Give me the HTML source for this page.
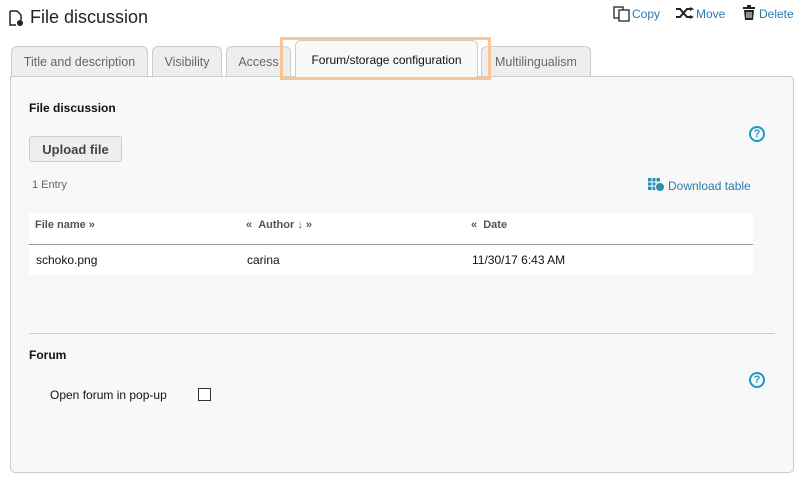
<!DOCTYPE html>
<html><head><style>
*{box-sizing:border-box;margin:0;padding:0}
body{width:802px;height:484px;background:#fff;font-family:"Liberation Sans",Arial,sans-serif;position:relative;overflow:hidden;color:#222}
.a{position:absolute}
.tab{position:absolute;top:46px;height:31px;background:#eeeeee;border:1px solid #ccc;border-bottom:none;border-radius:6px 6px 0 0;font-size:12.5px;color:#666;text-align:center;line-height:30px}
.panel{position:absolute;left:10px;top:76px;width:784px;height:397px;background:#f8f8f8;border:1px solid #ccc;border-radius:0 4px 5px 5px}
.link{color:#2a7ab0;font-size:12px}
.help{position:absolute;width:16px;height:16px;border:2px solid #1a9bc0;border-radius:50%;color:#1a9bc0;font-size:11px;font-weight:bold;text-align:center;line-height:12px}
</style></head><body>
<svg class="a" style="left:9px;top:10px" width="16" height="17" viewBox="0 0 16 17"><path d="M1 1h7l4 4v5M1 1v14h6" fill="none" stroke="#222" stroke-width="1.5"/><circle cx="11" cy="13" r="3" fill="#222"/></svg>
<div class="a" style="left:30px;top:7px;font-size:18px;color:#222">File discussion</div>

<svg class="a" style="left:613px;top:6px" width="18" height="16" viewBox="0 0 18 16"><rect x="1" y="1" width="9" height="11" fill="#fff" stroke="#222" stroke-width="1.3"/><rect x="6" y="4" width="10" height="11" fill="#fff" stroke="#222" stroke-width="1.3"/></svg>
<div class="a link" style="left:632px;top:7px">Copy</div>
<svg class="a" style="left:676px;top:7px" width="18" height="12" viewBox="0 0 18 12"><path d="M0 2h4l7 8h4M0 10h4l7-8h4" fill="none" stroke="#222" stroke-width="2"/><path d="M14 0l4 2-4 2zM14 8l4 2-4 2z" fill="#222"/></svg>
<div class="a link" style="left:696px;top:7px">Move</div>
<svg class="a" style="left:742px;top:5px" width="14" height="16" viewBox="0 0 14 16"><rect x="1" y="2" width="12" height="2" fill="#222"/><rect x="5" y="0" width="4" height="2" fill="#222"/><path d="M2 5h10l-1 10H3z" fill="#222"/><path d="M5 7v6M7 7v6M9 7v6" stroke="#fff" stroke-width="1"/></svg>
<div class="a link" style="left:759px;top:7px">Delete</div>

<div class="tab" style="left:11px;width:137px">Title and description</div>
<div class="tab" style="left:152px;width:70px">Visibility</div>
<div class="tab" style="left:226px;width:65px">Access</div>
<div class="tab" style="left:481px;width:110px">Multilingualism</div>
<div class="panel"></div>
<div class="tab" style="left:295px;top:40px;height:37px;width:183px;background:#f8f8f8;color:#111;line-height:38px;border-bottom:none;font-size:12px">Forum/storage configuration</div>
<div class="a" style="left:280px;top:37px;width:211px;height:43px;border:3px solid #f9c594"></div>

<div class="a" style="left:29px;top:101px;font-size:12px;font-weight:bold;color:#111">File discussion</div>
<div class="help" style="left:749px;top:126px">?</div>
<div class="a" style="left:29px;top:136px;width:93px;height:26px;background:#eee;border:1px solid #ccc;border-radius:3px;font-size:13px;font-weight:bold;color:#444;text-align:center;line-height:25px">Upload file</div>
<div class="a" style="left:32px;top:179px;font-size:11px;color:#666">1 Entry</div>
<svg class="a" style="left:648px;top:178px" width="17" height="14" viewBox="0 0 17 14"><rect x="0" y="0" width="12" height="12" fill="#2a8fb0"/><path d="M0 4h12M0 8h12M4 0v12M8 0v12" stroke="#fff" stroke-width="1"/><circle cx="12" cy="9" r="4.5" fill="#2a8fb0" stroke="#f8f8f8"/></svg>
<div class="a link" style="left:668px;top:179px">Download table</div>

<div class="a" style="left:29px;top:213px;width:724px;height:62px;background:#fff"></div>
<div class="a" style="left:29px;top:244px;width:724px;height:1px;background:#999"></div>
<div class="a" style="left:35px;top:219px;font-size:11px;font-weight:bold;color:#555">File name »</div>
<div class="a" style="left:246px;top:219px;font-size:11px;font-weight:bold;color:#555">« &nbsp;Author ↓ »</div>
<div class="a" style="left:471px;top:219px;font-size:11px;font-weight:bold;color:#555">« &nbsp;Date</div>
<div class="a" style="left:36px;top:253px;font-size:12px;color:#111">schoko.png</div>
<div class="a" style="left:247px;top:253px;font-size:12px;color:#111">carina</div>
<div class="a" style="left:472px;top:253px;font-size:12px;color:#111">11/30/17 6:43 AM</div>

<div class="a" style="left:29px;top:333px;width:746px;height:1px;background:#ccc"></div>
<div class="a" style="left:29px;top:348px;font-size:12px;font-weight:bold;color:#111">Forum</div>
<div class="help" style="left:749px;top:372px">?</div>
<div class="a" style="left:50px;top:388px;font-size:12px;color:#111">Open forum in pop-up</div>
<div class="a" style="left:198px;top:388px;width:13px;height:13px;border:1px solid #333;background:#fff"></div>
</body></html>
